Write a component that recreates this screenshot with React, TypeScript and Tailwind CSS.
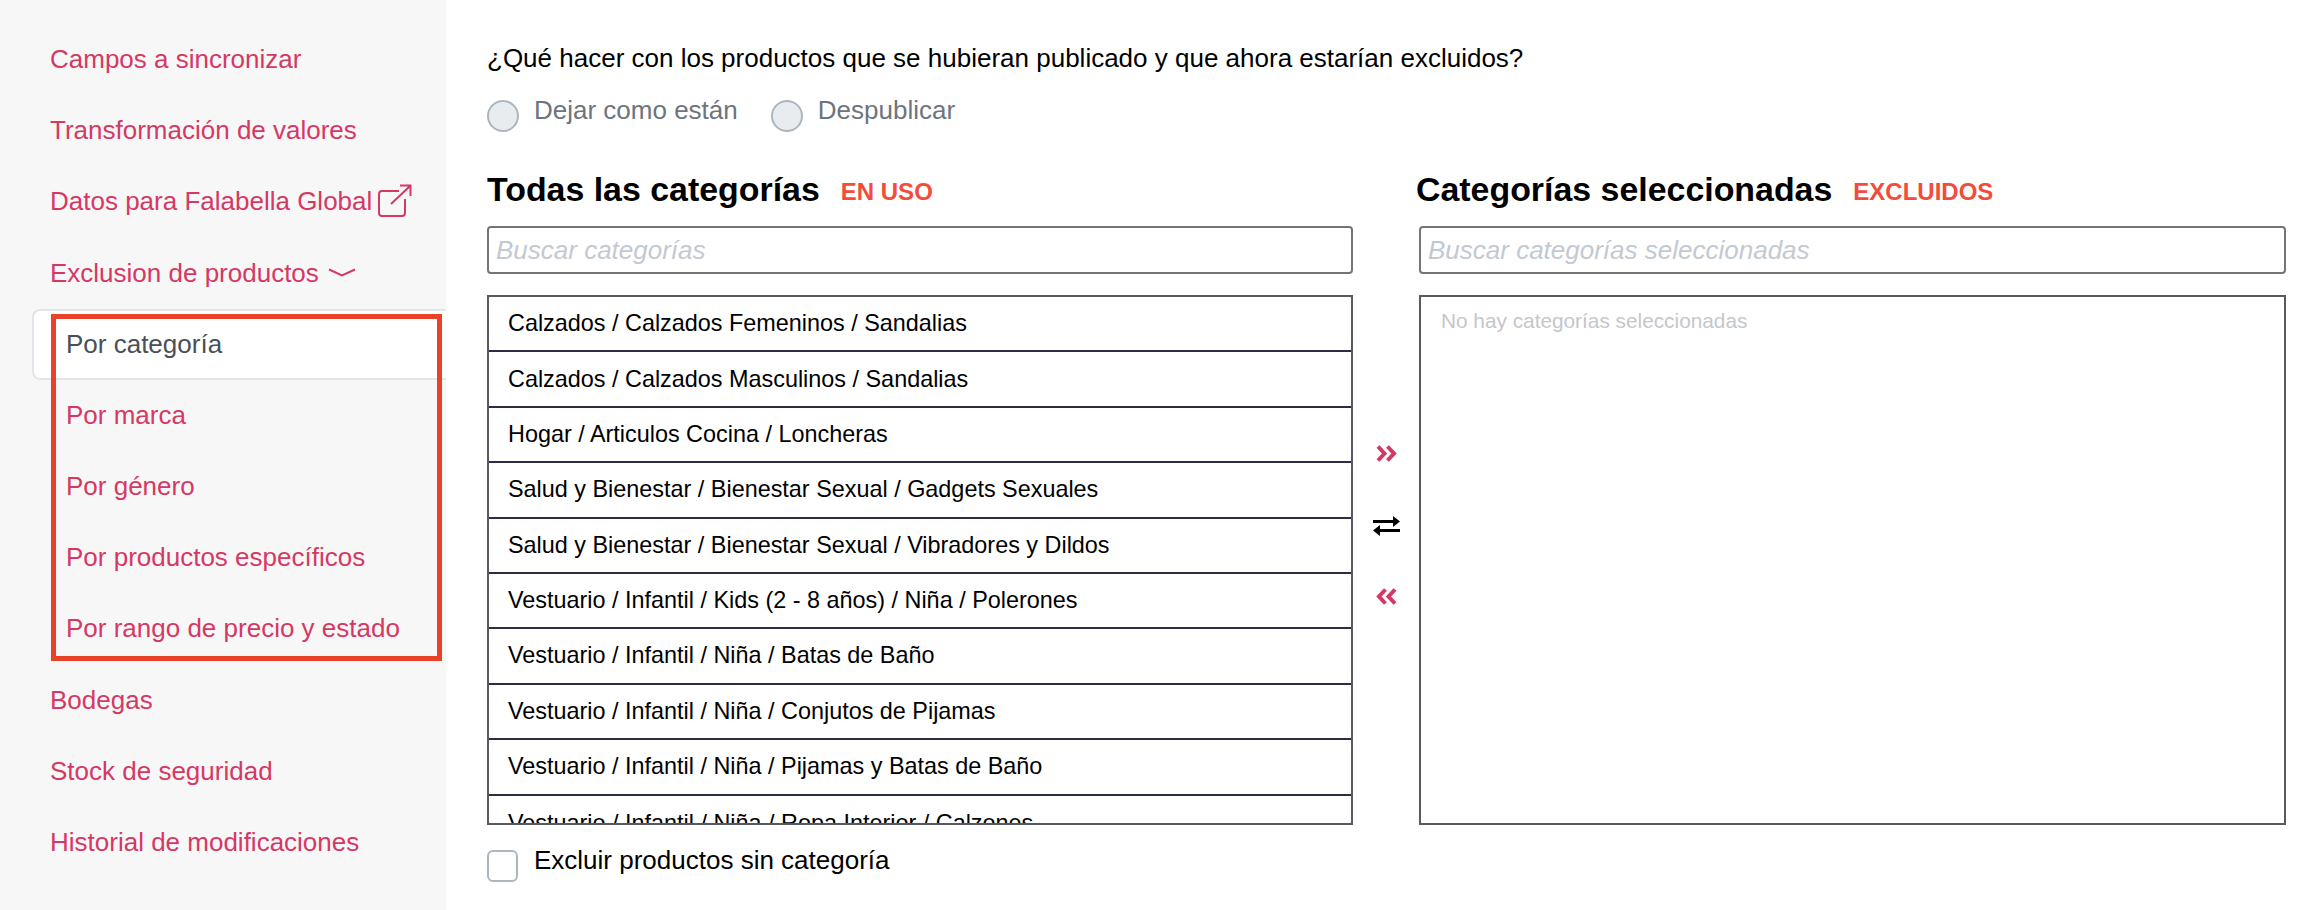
const items = [
  "Calzados / Calzados Femeninos / Sandalias",
  "Calzados / Calzados Masculinos / Sandalias",
  "Hogar / Articulos Cocina / Loncheras",
  "Salud y Bienestar / Bienestar Sexual / Gadgets Sexuales",
  "Salud y Bienestar / Bienestar Sexual / Vibradores y Dildos",
  "Vestuario / Infantil / Kids (2 - 8 años) / Niña / Polerones",
  "Vestuario / Infantil / Niña / Batas de Baño",
  "Vestuario / Infantil / Niña / Conjutos de Pijamas",
  "Vestuario / Infantil / Niña / Pijamas y Batas de Baño",
  "Vestuario / Infantil / Niña / Ropa Interior / Calzones",
];

function NavItem({ children, sub }: { children: React.ReactNode; sub?: boolean }) {
  return (
    <div className={`h-[71.2px] flex items-center text-[26px] text-[#d63864] ${sub ? "pl-[66px]" : "pl-[50px]"}`}>
      {children}
    </div>
  );
}

function Panel({ title, tag, placeholder, shift, children }: { title: string; tag: string; placeholder: string; shift?: boolean; children: React.ReactNode }) {
  return (
    <div className={`flex flex-col ${shift ? "w-[867px]" : "w-[866px]"}`}>
      <div className={`h-[72px] flex items-center ${shift ? "-ml-[3px]" : ""}`}>
        <span className="text-[33.9px] font-bold text-black leading-none">{title}</span>
        <span className="ml-[21px] mt-[3px] text-[24px] font-bold text-[#f44b3b] leading-none">{tag}</span>
      </div>
      <input
        readOnly
        placeholder={placeholder}
        className="h-[48px] w-full border-2 border-[#757575] rounded-[4px] px-[7px] text-[26px] italic placeholder:text-[#c3c9d2] outline-none"
      />
      <div className="mt-[21px] h-[530px] border-2 border-[#565960] overflow-hidden">{children}</div>
    </div>
  );
}

export default function App() {
  return (
    <div className="relative w-[2312px] h-[910px] flex bg-white overflow-hidden" style={{ fontFamily: '"Liberation Sans", Arial, sans-serif' }}>
      <aside className="w-[446px] h-full bg-[#f7f7f7] pt-[24px]">
        <NavItem>Campos a sincronizar</NavItem>
        <NavItem>Transformación de valores</NavItem>
        <NavItem>
          Datos para Falabella Global
          <svg className="ml-[6px] -mt-[3px]" width="34" height="33" viewBox="0 0 34 33" fill="none" stroke="#d63864" strokeWidth="2">
            <path d="M21 7H4a3 3 0 0 0-3 3v19a3 3 0 0 0 3 3h20a3 3 0 0 0 3-3V15" />
            <path d="M13 20 32 2M22 1.500h10.500V12" />
          </svg>
        </NavItem>
        <NavItem>
          Exclusion de productos
          <svg className="ml-[9px]" width="28" height="10" viewBox="0 0 28 10" fill="none" stroke="#d63864" strokeWidth="2">
            <path d="M1 1.500 14 7.500 27 1.500" />
          </svg>
        </NavItem>
        <div className="ml-[32px] h-[71px] bg-white border-2 border-r-0 border-[#e2e6ea] rounded-l-[8px] flex items-center pl-[32px] text-[26px] text-[#495057]">
          Por categoría
        </div>
        <NavItem sub>Por marca</NavItem>
        <NavItem sub>Por género</NavItem>
        <NavItem sub>Por productos específicos</NavItem>
        <NavItem sub>Por rango de precio y estado</NavItem>
        <NavItem>Bodegas</NavItem>
        <NavItem>Stock de seguridad</NavItem>
        <NavItem>Historial de modificaciones</NavItem>
      </aside>

      <main className="flex-1 pl-[41px] pt-[44px]">
        <p className="text-[26px] leading-[29px] text-black">¿Qué hacer con los productos que se hubieran publicado y que ahora estarían excluidos?</p>
        <div className="mt-[23px] flex h-[42px]">
          <div className="flex items-start">
            <span className="mt-[4px] w-[32px] h-[32px] rounded-full bg-[#e9ecef] border-2 border-[#adb5bd]" />
            <span className="ml-[15px] text-[26px] leading-[29px] text-[#6c757d]">Dejar como están</span>
          </div>
          <div className="ml-[33px] flex items-start">
            <span className="mt-[4px] w-[32px] h-[32px] rounded-full bg-[#e9ecef] border-2 border-[#adb5bd]" />
            <span className="ml-[15px] text-[26px] leading-[29px] text-[#6c757d]">Despublicar</span>
          </div>
        </div>
        <div className="mt-[16px] flex">
          <Panel title="Todas las categorías" tag="EN USO" placeholder="Buscar categorías">
            {items.map((t, i) => (
              <div key={t} className={`h-[55.4px] flex items-center pl-[19px] text-[23.4px] text-black ${i < items.length - 1 ? "border-b-2 border-[#2b2d42]" : ""}`}>
                {t}
              </div>
            ))}
          </Panel>
          <div className="w-[66px] flex flex-col items-center pt-[291px]">
            <svg width="21" height="17" viewBox="0 0 21 17" fill="none" stroke="#d63864" strokeWidth="4">
              <path d="M2 1.500l6.500 7-6.500 7M11.500 1.500l6.500 7-6.500 7" />
            </svg>
            <svg className="mt-[54px]" width="27" height="20" viewBox="0 0 27 20" fill="#000">
              <path d="M0 4h20V0l7 5.500-7 5.500V7H0zM27 13H7V9l-7 5.500L7 20v-4h20z" />
            </svg>
            <svg className="mt-[52px]" width="21" height="17" viewBox="0 0 21 17" fill="none" stroke="#d63864" strokeWidth="4">
              <path d="M9.500 1.500 3 8.500l6.500 7M19 1.500l-6.500 7 6.500 7" />
            </svg>
          </div>
          <Panel title="Categorías seleccionadas" tag="EXCLUIDOS" placeholder="Buscar categorías seleccionadas" shift>
            <div className="pl-[20px] pt-[12px] text-[20.8px] leading-[24px] text-[#c4c7cb]">No hay categorías seleccionadas</div>
          </Panel>
        </div>
        <div className="mt-[25px] flex items-start">
          <span className="w-[31px] h-[32px] rounded-[6px] bg-white border-2 border-[#adb5bd]" />
          <span className="ml-[16px] -mt-[4px] text-[26px] leading-[29px] text-black">Excluir productos sin categoría</span>
        </div>
      </main>

      <div className="absolute left-[51px] top-[314px] w-[391px] h-[347px] border-[5px] border-[#ea4228] pointer-events-none" />
    </div>
  );
}
